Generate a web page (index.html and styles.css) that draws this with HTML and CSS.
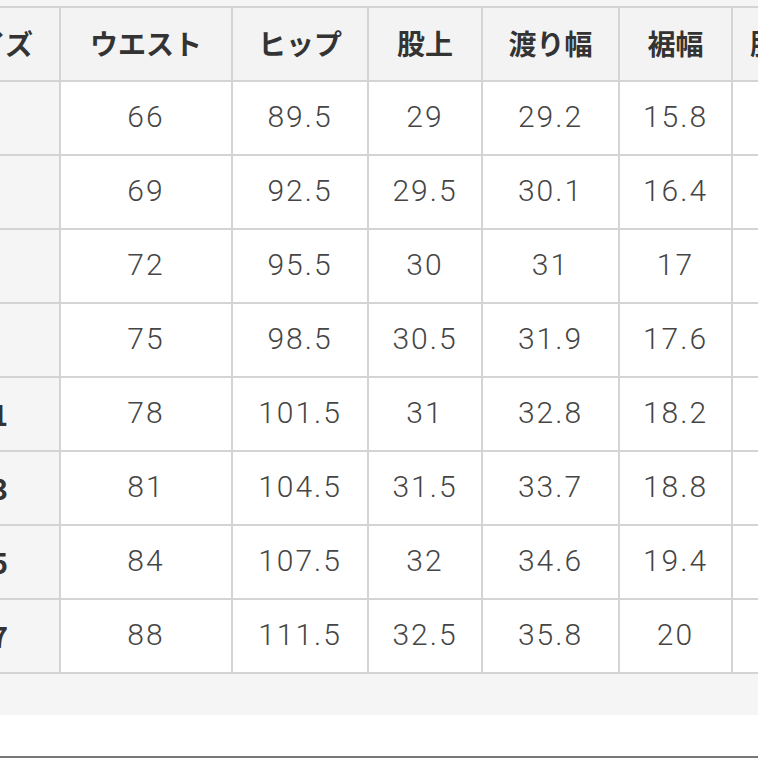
FILE: index.html
```html
<!DOCTYPE html>
<html lang="ja">
<head>
<meta charset="utf-8">
<link rel="stylesheet" href="styles.css">
</head>
<body>
<div class="scroller">
  <table class="size-table">
    <colgroup>
      <col class="c-size"><col class="c-waist"><col class="c-hip"><col class="c-rise"><col class="c-thigh"><col class="c-hem"><col class="c-inseam">
    </colgroup>
    <thead>
      <tr><th class="label">サイズ</th><th>ウエスト</th><th>ヒップ</th><th>股上</th><th>渡り幅</th><th>裾幅</th><th>股下</th></tr>
    </thead>
    <tbody>
      <tr><th class="label">3</th><td>66</td><td>89.5</td><td>29</td><td>29.2</td><td>15.8</td><td>76</td></tr>
      <tr><th class="label">5</th><td>69</td><td>92.5</td><td>29.5</td><td>30.1</td><td>16.4</td><td>76</td></tr>
      <tr><th class="label">7</th><td>72</td><td>95.5</td><td>30</td><td>31</td><td>17</td><td>77</td></tr>
      <tr><th class="label">9</th><td>75</td><td>98.5</td><td>30.5</td><td>31.9</td><td>17.6</td><td>77</td></tr>
      <tr><th class="label">11</th><td>78</td><td>101.5</td><td>31</td><td>32.8</td><td>18.2</td><td>78</td></tr>
      <tr><th class="label">13</th><td>81</td><td>104.5</td><td>31.5</td><td>33.7</td><td>18.8</td><td>78</td></tr>
      <tr><th class="label">15</th><td>84</td><td>107.5</td><td>32</td><td>34.6</td><td>19.4</td><td>79</td></tr>
      <tr><th class="label">17</th><td>88</td><td>111.5</td><td>32.5</td><td>35.8</td><td>20</td><td>79</td></tr>
    </tbody>
  </table>
</div>
<div class="footer-gap"></div>
</body>
</html>
```

FILE: styles.css
```css
html, body {
  margin: 0;
  padding: 0;
  background: #ffffff;
}

body {
  width: 758px;
  height: 758px;
  overflow: hidden;
  font-family: "Noto Sans CJK JP", "Noto Sans", sans-serif;
}

.scroller {
  width: 758px;
  overflow: hidden;
  background: #f5f5f5;
  padding-top: 6px;
  padding-bottom: 41px;
}

.size-table {
  table-layout: fixed;
  width: 903px;
  margin-left: -78px;
  border-collapse: separate;
  border-spacing: 2px;
  background: #d4d4d4;
}

.c-size { width: 135px; }
.c-waist { width: 170px; }
.c-hip { width: 134px; }
.c-rise { width: 112px; }
.c-thigh { width: 135px; }
.c-hem { width: 111px; }
.c-inseam { width: 90px; }

.size-table th,
.size-table td {
  box-sizing: border-box;
  height: 72px;
  padding: 0;
  text-align: center;
  vertical-align: middle;
  white-space: nowrap;
  overflow: hidden;
}

.size-table thead th {
  background: #f3f3f3;
  color: #333333;
  font-size: 28px;
  font-weight: 700;
  padding-bottom: 2px;
}

.size-table tbody th.label {
  background: #f5f5f5;
  color: #333333;
  font-size: 28px;
  font-weight: 700;
}

.size-table td {
  background: #ffffff;
  color: #454545;
  font-family: Roboto, "Noto Sans", sans-serif;
  font-size: 30px;
  font-weight: 300;
  letter-spacing: 2px;
  padding-bottom: 3px;
}

.footer-gap {
  height: 41px;
  border-bottom: 2px solid #777777;
}
```
